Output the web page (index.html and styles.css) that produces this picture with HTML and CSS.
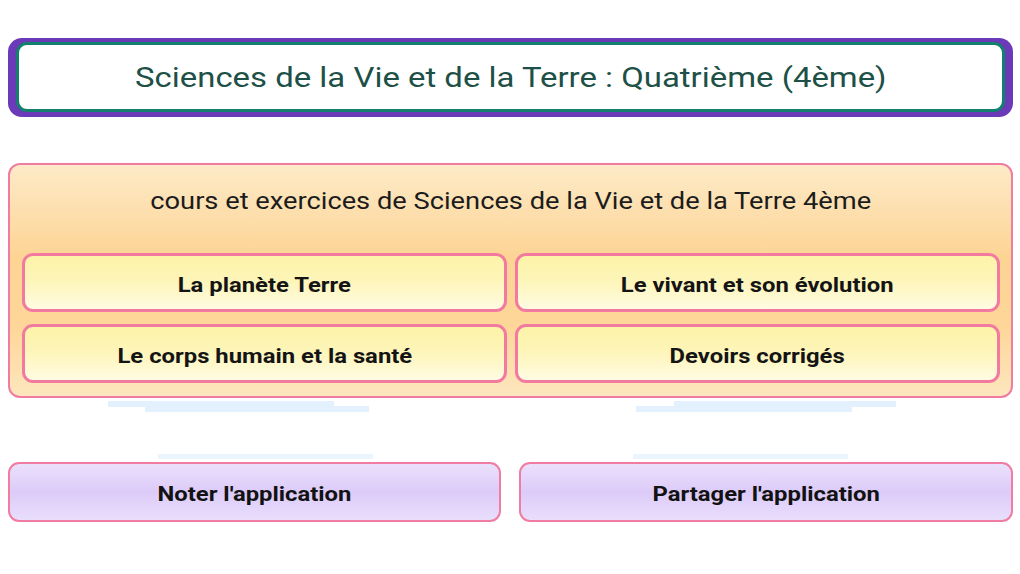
FILE: index.html
```html
<!DOCTYPE html>
<html lang="fr">
<head>
<meta charset="utf-8">
<title>SVT 4ème</title>
<link rel="stylesheet" href="styles.css">
</head>
<body>
<div class="page">
  <header class="title-frame">
    <div class="title-box"><span class="wide">Sciences de la Vie et de la Terre : Quatrième (4ème)</span></div>
  </header>

  <section class="course-card">
    <h2 class="course-title"><span class="wide">cours et exercices de Sciences de la Vie et de la Terre 4ème</span></h2>
    <div class="course-grid">
      <a class="course-btn"><span class="wide">La planète Terre</span></a>
      <a class="course-btn"><span class="wide">Le vivant et son évolution</span></a>
      <a class="course-btn"><span class="wide">Le corps humain et la santé</span></a>
      <a class="course-btn"><span class="wide">Devoirs corrigés</span></a>
    </div>
  </section>

  <div class="ghosts">
    <span class="ghost g1"></span>
    <span class="ghost g1b"></span>
    <span class="ghost g2"></span>
    <span class="ghost g2b"></span>
    <span class="ghost g3"></span>
    <span class="ghost g4"></span>
  </div>

  <div class="actions">
    <a class="action-btn"><span class="wide">Noter l'application</span></a>
    <a class="action-btn"><span class="wide">Partager l'application</span></a>
  </div>
</div>
</body>
</html>
```

FILE: styles.css
```css
* { box-sizing: border-box; }
html, body { margin: 0; padding: 0; background: #ffffff; }
body {
  width: 1020px;
  height: 574px;
  overflow: hidden;
  font-family: Roboto, "Noto Sans", "Liberation Sans", sans-serif;
}
.wide {
  display: inline-block;
  white-space: nowrap;
  transform: scaleX(1.16);
}
.page {
  padding: 38px 7px 0 8px;
  display: flex;
  flex-direction: column;
}
.title-frame {
  background: #6a3ab8;
  border-radius: 14px;
  padding: 4px 8px 5px 8px;
  height: 79px;
}
.title-box {
  height: 100%;
  background: #ffffff;
  border: 3px solid #12806c;
  border-radius: 11px;
  display: flex;
  align-items: center;
  justify-content: center;
  color: #1d5046;
  font-size: 28px;
  padding-top: 1px;
}
.title-box .wide { transform: scaleX(1.175); }
.course-card {
  margin-top: 46px;
  height: 235px;
  border: 2px solid #f07ca2;
  border-radius: 12px;
  background: linear-gradient(to bottom, #fdeac8 0%, #fdd494 40%, #fed699 70%, #fde6bd 100%);
  padding: 0 11px 0 12px;
  display: flex;
  flex-direction: column;
}
.course-title {
  margin: 0;
  height: 88px;
  padding-top: 22px;
  line-height: 28px;
  text-align: center;
  font-weight: 400;
  font-size: 23.5px;
  color: #1c1c1c;
}
.course-grid {
  display: grid;
  grid-template-columns: 1fr 1fr;
  column-gap: 8px;
  row-gap: 12px;
}
.course-btn {
  height: 59px;
  border: 3px solid #f27aa0;
  border-radius: 11px;
  background: linear-gradient(to bottom, #fdf3a8 0%, #fdf5b8 45%, #fffbe2 100%);
  display: flex;
  align-items: center;
  justify-content: center;
  font-weight: 700;
  font-size: 21px;
  color: #141414;
  padding-top: 4px;
}
.course-btn .wide, .action-btn .wide { transform: scaleX(1.135); }
.ghosts {
  height: 64px;
  position: relative;
}
.ghost {
  position: absolute;
  background: #e2f1fd;
}
.g1 { top: 3px; left: 100px; width: 226px; height: 6px; }
.g1b { top: 8px; left: 137px; width: 224px; height: 6px; }
.g2 { top: 3px; left: 666px; width: 222px; height: 6px; }
.g2b { top: 8px; left: 628px; width: 216px; height: 6px; }
.g3 { top: 56px; left: 150px; width: 215px; height: 5px; background: #eaf5fe; }
.g4 { top: 56px; left: 625px; width: 215px; height: 5px; background: #eaf5fe; }
.actions {
  display: grid;
  grid-template-columns: 493px 494px;
  column-gap: 18px;
}
.action-btn {
  height: 60px;
  border: 2px solid #f07ca2;
  border-radius: 11px;
  background: linear-gradient(to bottom, #ebe0fc 0%, #dccbf8 50%, #e9defc 100%);
  display: flex;
  align-items: center;
  justify-content: center;
  font-weight: 700;
  font-size: 21px;
  color: #121212;
  padding-top: 3px;
}
```
